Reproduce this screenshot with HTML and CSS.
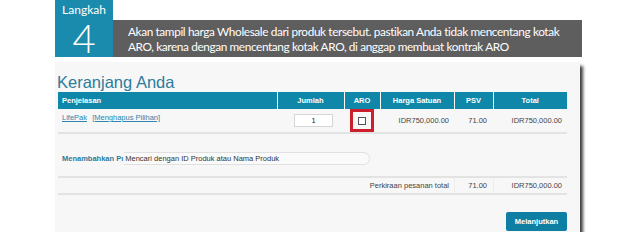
FILE: index.html
```html
<!DOCTYPE html>
<html lang="id">
<head>
  <meta charset="UTF-8" />
  <title>Langkah 4 - Keranjang Anda</title>
  <link rel="stylesheet" href="styles.css">
</head>
<body>

  <div class="step">
    <div class="step-num">
      <span class="step-label">Langkah</span>
      <span class="step-digit">4</span>
    </div>
    <div class="step-text">
      <p>Akan tampil harga Wholesale dari produk tersebut. pastikan Anda tidak mencentang kotak</p>
      <p>ARO, karena dengan mencentang kotak ARO, di anggap membuat kontrak ARO</p>
    </div>
  </div>

  <div class="card">
    <h2 class="card-title">Keranjang Anda</h2>

    <table class="cart">
      <thead>
        <tr>
          <th class="col-desc">Penjelasan</th>
          <th class="col-qty">Jumlah</th>
          <th class="col-aro">ARO</th>
          <th class="col-price">Harga Satuan</th>
          <th class="col-psv">PSV</th>
          <th class="col-total">Total</th>
        </tr>
      </thead>
      <tbody>
        <tr>
          <td class="col-desc"><a href="#">LifePak</a> <a href="#" class="remove">[Menghapus Pilihan]</a></td>
          <td class="col-qty"><span class="qty-box">1</span></td>
          <td class="col-aro"><span class="aro-mark"><span class="check"></span></span></td>
          <td class="num">IDR750,000.00</td>
          <td class="num psv">71.00</td>
          <td class="num">IDR750,000.00</td>
        </tr>
      </tbody>
    </table>

    <div class="search-row">
      <span class="search-label">Menambahkan Pı</span>
      <span class="search-input">Mencari dengan ID Produk atau Nama Produk</span>
    </div>

    <div class="totals">
      <span class="totals-label">Perkiraan pesanan total</span>
      <span class="totals-psv">71.00</span>
      <span class="totals-sum">IDR750,000.00</span>
    </div>

    <div class="actions">
      <button class="next-btn">Melanjutkan</button>
    </div>
  </div>

</body>
</html>
```

FILE: styles.css
```css
* {
  box-sizing: border-box;
}

body {
  margin: 0;
  padding: 0;
  background: #fff;
  font-family: 'Liberation Sans', Arial, sans-serif;
}

.step {
  display: flex;
  margin-left: 55px;
  width: 527px;
  height: 57px;
}

.step-num {
  width: 58px;
  background: #1a8aad;
  color: #fff;
  display: flex;
  flex-direction: column;
  align-items: center;
}

.step-label {
  font-family: 'Lato', sans-serif;
  font-size: 12px;
  line-height: 13px;
  margin-top: 3px;
  white-space: nowrap;
}

.step-digit {
  font-family: 'Lato', sans-serif;
  font-weight: 300;
  font-size: 40px;
  line-height: 32px;
  margin-top: 6px;
}

.step-text {
  flex: 1;
  margin-top: 20px;
  background: #5e5e5e;
  color: #fff;
  font-family: 'Lato', sans-serif;
  font-size: 11.8px;
  letter-spacing: -0.38px;
  line-height: 15px;
  padding: 4px 0 0 15px;
  white-space: nowrap;
}

.step-text p {
  margin: 0;
}

.card {
  margin: 5px 0 0 55px;
  width: 525px;
  height: 170px;
  padding: 11px 13px 0 3px;
  background: #f7f7f7;
  box-shadow: 3px 4px 3px rgba(0, 0, 0, 0.75);
}

.card-title {
  margin: 0 0 0 -1px;
  font-size: 16.5px;
  line-height: 19px;
  font-weight: normal;
  color: #2b7c9b;
}

.cart {
  width: 509px;
  border-collapse: collapse;
  font-size: 7.5px;
}

.cart th {
  height: 17px;
  padding: 0;
  background: #0f87a9;
  color: #fff;
  font-weight: bold;
  text-align: center;
  border-left: 1px solid #fff;
}

.cart th:first-child {
  border-left: none;
  text-align: left;
  padding-left: 4px;
}

.cart td {
  height: 21px;
  padding: 0;
  color: #444;
  border-bottom: 2px solid #e3e3e3;
}

.col-desc { width: 219px; }
.col-qty { width: 67px; }
.col-aro { width: 36px; }
.col-price { width: 74px; }
.col-psv { width: 39px; }
.col-total { width: 74px; }

.cart td.col-desc {
  padding-left: 4px;
  padding-bottom: 6px;
}

.cart a {
  color: #2d86ad;
}

.cart a.remove {
  margin-left: 3px;
}

.cart td.col-qty {
  text-align: right;
  padding-right: 11px;
}

.qty-box {
  display: inline-block;
  width: 39px;
  height: 13px;
  line-height: 12px;
  text-align: center;
  background: #fff;
  border: 1px solid #d6d6d6;
  color: #222;
}

.cart td.col-aro {
  text-align: center;
}

.aro-mark {
  display: inline-flex;
  justify-content: center;
  align-items: center;
  width: 24px;
  height: 23px;
  border: 3px solid #cc1f2b;
  vertical-align: middle;
}

.check {
  width: 8px;
  height: 8px;
  border: 1px solid #555;
  background: #fff;
}

.cart td.num {
  text-align: right;
  padding-right: 5px;
}

.cart td.psv {
  padding-right: 6px;
}

.search-row {
  display: flex;
  align-items: center;
  height: 42px;
  padding: 6px 0 0 4px;
  font-size: 7.5px;
}

.search-label {
  color: #2b7c9b;
  font-weight: bold;
  margin-right: 1px;
  white-space: nowrap;
}

.search-input {
  width: 246px;
  height: 13px;
  line-height: 12px;
  padding-left: 1px;
  color: #333;
  border: 1px solid #e0e0e0;
  border-left: none;
  border-radius: 0 7px 7px 0;
  background: #fafafa;
}

.totals {
  display: flex;
  width: 509px;
  height: 19px;
  align-items: center;
  border-top: 2px solid #e3e3e3;
  border-bottom: 2px solid #e3e3e3;
  font-size: 7.5px;
  color: #444;
}

.totals-label {
  flex: 1;
  text-align: right;
  padding-right: 5px;
}

.totals-psv {
  width: 39px;
  align-self: stretch;
  display: flex;
  align-items: center;
  justify-content: flex-end;
  padding-right: 6px;
  border-left: 1px solid #ececec;
}

.totals-sum {
  width: 74px;
  align-self: stretch;
  display: flex;
  align-items: center;
  justify-content: flex-end;
  padding-right: 5px;
  border-left: 1px solid #ececec;
}

.actions {
  display: flex;
  justify-content: flex-end;
  width: 509px;
  margin-top: 17px;
}

.next-btn {
  width: 61px;
  height: 19px;
  padding: 0;
  border: none;
  border-radius: 2px;
  background: #0e7fa3;
  color: #fff;
  font-family: 'Liberation Sans', Arial, sans-serif;
  font-size: 7.5px;
  font-weight: bold;
}
```
